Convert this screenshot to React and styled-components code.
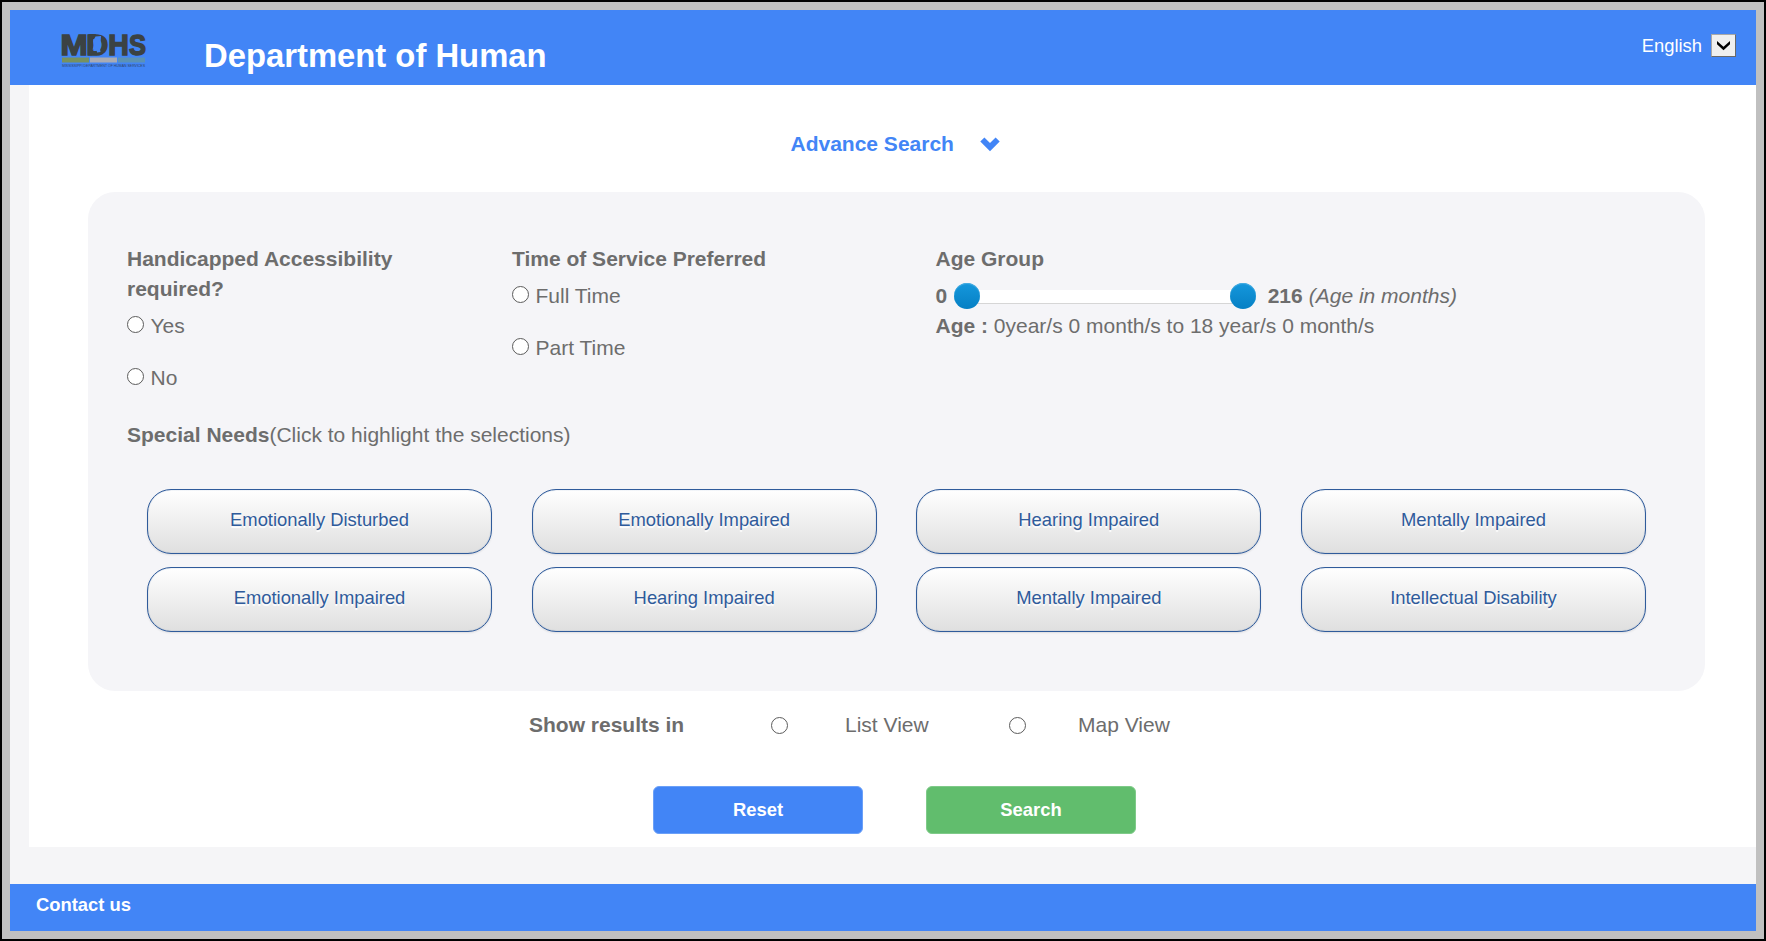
import React from "react";
import styled, { createGlobalStyle } from "styled-components";

const GlobalStyle = createGlobalStyle`
  *, *::before, *::after { box-sizing: border-box; }
  body {
    margin: 0;
    font-family: "Liberation Sans", Arial, sans-serif;
    font-size: 21px;
    line-height: 30px;
    color: #6d6d6d;
  }
`;

const Frame = styled.div`
  height: 941px;
  border: 2px solid #000;
`;

const Page = styled.div`
  height: 100%;
  border: 8px solid #c0c0c0;
  background: #f5f5f7;
  display: flex;
  flex-direction: column;
`;

const Header = styled.header`
  flex: none;
  height: 75px;
  padding: 0 20px 0 51px;
  background: #4285f6;
  color: #fff;
  display: flex;
  align-items: flex-start;
`;

const Logo = styled.svg`
  flex: none;
  width: 86px;
  height: 38px;
  margin-top: 21px;
  overflow: visible;
`;

const Title = styled.h1`
  margin: 27px 0 0 57px;
  font-size: 32.8px;
  line-height: 38px;
  font-weight: bold;
  white-space: nowrap;
`;

const Language = styled.div`
  margin: 24px 0 0 auto;
  display: flex;
  align-items: center;
  gap: 9px;
  font-size: 18.4px;
  line-height: 23px;
`;

const LanguageButton = styled.button`
  width: 25px;
  height: 23px;
  padding: 0;
  background: #efefef;
  border: 1px solid;
  border-color: #a8a8a8 #696969 #696969 #a8a8a8;
  display: flex;
  align-items: center;
  justify-content: center;
`;

const Main = styled.main`
  flex: none;
  height: 762px;
  margin-left: 19px;
  padding: 44px 51px 0 59px;
  background: #fff;
`;

const SearchToggle = styled.button`
  display: flex;
  align-items: center;
  gap: 26.5px;
  margin: 0 0 33px 702.5px;
  padding: 0;
  border: 0;
  background: none;
  color: #4285f6;
  font: bold 21px/30px "Liberation Sans", Arial, sans-serif;
`;

const Panel = styled.section`
  height: 499px;
  padding: 52px 39px 0;
  background: #f5f5f8;
  border-radius: 27px;
`;

const Filters = styled.div`
  display: grid;
  grid-template-columns: 385px 423.5px 1fr;
  height: 176px;
`;

const Heading = styled.h2`
  margin: 0 0 7px;
  max-width: 300px;
  font-size: 21px;
  line-height: 30px;
`;

const Option = styled.label`
  display: flex;
  align-items: center;
  gap: 6.5px;
  height: 30px;
  margin-bottom: 22px;
`;

const Radio = styled.input.attrs({ type: "radio" })`
  appearance: none;
  flex: none;
  width: 17px;
  height: 17px;
  margin: 0 0 ${(p) => p.$lift || 0}px;
  border: 1px solid #5c5c5c;
  border-radius: 50%;
  background: #fff;
`;

const RangeRow = styled.div`
  display: flex;
  align-items: center;
  height: 30px;
`;

const Track = styled.div`
  display: flex;
  align-items: center;
  justify-content: space-between;
  width: 302px;
  height: 14px;
  margin: 1px 12px 0 6.5px;
  border-radius: 7px;
  background: #fff;
  border-bottom: 1px solid #d6d6d6;
`;

const Thumb = styled.span`
  width: 26px;
  height: 26px;
  flex: none;
  border-radius: 50%;
  background: linear-gradient(#1597dc, #0680c4);
  box-shadow: inset 0 1px 1px #4aaee2;
`;

const Hint = styled.em`
  margin-left: 6px;
`;

const Chips = styled.div`
  display: grid;
  grid-template-columns: repeat(4, 345px);
  justify-content: space-between;
  row-gap: 13px;
  margin: 39px 20px 0;
`;

const Chip = styled.button`
  height: 65px;
  padding: 0 0 3px;
  border: 1px solid #2f5b9b;
  border-radius: 24px;
  background: linear-gradient(#fff, #dfdfdf);
  box-shadow: inset 0 0 1px rgba(47, 91, 155, 0.6), 0 1px 2px rgba(0, 0, 0, 0.1);
  color: #2f5b9b;
  font: 18.4px "Liberation Sans", Arial, sans-serif;
  text-shadow: 0 2px 1px #fff;
`;

const ResultView = styled.div`
  display: flex;
  align-items: center;
  height: 30px;
  margin: 19px 0 0 441px;
`;

const ResultLabel = styled.strong`
  width: 242px;
`;

const ViewOption = styled.label`
  display: flex;
  align-items: center;
  gap: ${(p) => p.$gap}px;
  width: 238px;
`;

const Actions = styled.div`
  display: flex;
  gap: 63px;
  margin: 46px 0 0 565px;
`;

const Action = styled.button`
  width: 210px;
  height: 48px;
  padding: 0 0 1px;
  border: 1px solid ${(p) => (p.$green ? "#7fca89" : "#6ba0f8")};
  border-radius: 6px;
  background: ${(p) => (p.$green ? "#61bd6d" : "#4285f6")};
  color: #fff;
  font: bold 18.4px "Liberation Sans", Arial, sans-serif;
`;

const Footer = styled.footer`
  margin-top: auto;
  height: 47px;
  padding: 6px 26px;
  background: #4285f6;
  color: #fff;
  font-size: 18.4px;
  font-weight: bold;
`;

const needs = [
  "Emotionally Disturbed",
  "Emotionally Impaired",
  "Hearing Impaired",
  "Mentally Impaired",
  "Emotionally Impaired",
  "Hearing Impaired",
  "Mentally Impaired",
  "Intellectual Disability",
];

const logoLetters = [
  { letter: "M", x: -0.6, width: 27.2 },
  { letter: "D", x: 25.3, width: 22 },
  { letter: "H", x: 47.2, width: 20.6 },
  { letter: "S", x: 68, width: 17 },
];

function MdhsLogo() {
  return (
    <Logo viewBox="0 0 86 38" role="img" aria-label="MDHS">
      <g fontSize="29.5" fontWeight="bold" fill="#3b4243" stroke="#3b4243" strokeWidth="1.5">
        {logoLetters.map(({ letter, x, width }) => (
          <text key={letter} x={x} y="23.5" textLength={width} lengthAdjust="spacingAndGlyphs">{letter}</text>
        ))}
      </g>
      <path d="M27.5 3 H35 L31 9 V24.2 H27.5 Z" fill="#3b4243" />
      <path d="M34.5 5.5 L40 5 L39.2 19 L39.5 21 L36 21.5 L35.5 18.5 L31.5 18.5 L33 14.5 L32 10 Z" fill="#4285f6" />
      <rect x="1" y="26.5" width="27" height="5" fill="#77915f" />
      <rect x="29" y="26.5" width="27" height="5" fill="#a9abb3" />
      <rect x="57" y="26.5" width="27" height="5" fill="#5b92b5" />
      <text x="1" y="36" fontSize="3.4" fill="#2f4468" textLength="83" lengthAdjust="spacingAndGlyphs">
        MISSISSIPPI DEPARTMENT OF HUMAN SERVICES
      </text>
    </Logo>
  );
}

export default function App() {
  return (
    <>
      <GlobalStyle />
      <Frame>
        <Page>
          <Header>
            <MdhsLogo />
            <Title>Department of Human</Title>
            <Language>
              English
              <LanguageButton aria-label="Choose language">
                <svg width="15" height="11" viewBox="0 0 15 11">
                  <path d="M1 1 L7.5 6.8 L14 1 V4.2 L7.5 10.2 L1 4.2 Z" fill="#000" />
                </svg>
              </LanguageButton>
            </Language>
          </Header>
          <Main>
            <SearchToggle>
              Advance Search
              <svg width="20" height="15" viewBox="0 0 20 15">
                <path d="M0.3 4.6 L4.4 0.6 L10 6 L15.6 0.6 L19.7 4.6 L10 14.2 Z" fill="#4285f6" />
              </svg>
            </SearchToggle>
            <Panel>
              <Filters>
                <div>
                  <Heading>Handicapped Accessibility required?</Heading>
                  <Option><Radio name="access" $lift={3} />Yes</Option>
                  <Option><Radio name="access" $lift={3} />No</Option>
                </div>
                <div>
                  <Heading>Time of Service Preferred</Heading>
                  <Option><Radio name="time" $lift={3} />Full Time</Option>
                  <Option><Radio name="time" $lift={3} />Part Time</Option>
                </div>
                <div>
                  <Heading>Age Group</Heading>
                  <RangeRow>
                    <strong>0</strong>
                    <Track><Thumb /><Thumb /></Track>
                    <strong>216</strong>
                    <Hint>(Age in months)</Hint>
                  </RangeRow>
                  <div><strong>Age :</strong> 0year/s 0 month/s to 18 year/s 0 month/s</div>
                </div>
              </Filters>
              <div><strong>Special Needs</strong>(Click to highlight the selections)</div>
              <Chips>
                {needs.map((need, i) => <Chip key={i}>{need}</Chip>)}
              </Chips>
            </Panel>
            <ResultView>
              <ResultLabel>Show results in</ResultLabel>
              <ViewOption $gap={57}><Radio name="view" />List View</ViewOption>
              <ViewOption $gap={52}><Radio name="view" />Map View</ViewOption>
            </ResultView>
            <Actions>
              <Action>Reset</Action>
              <Action $green>Search</Action>
            </Actions>
          </Main>
          <Footer>Contact us</Footer>
        </Page>
      </Frame>
    </>
  );
}
